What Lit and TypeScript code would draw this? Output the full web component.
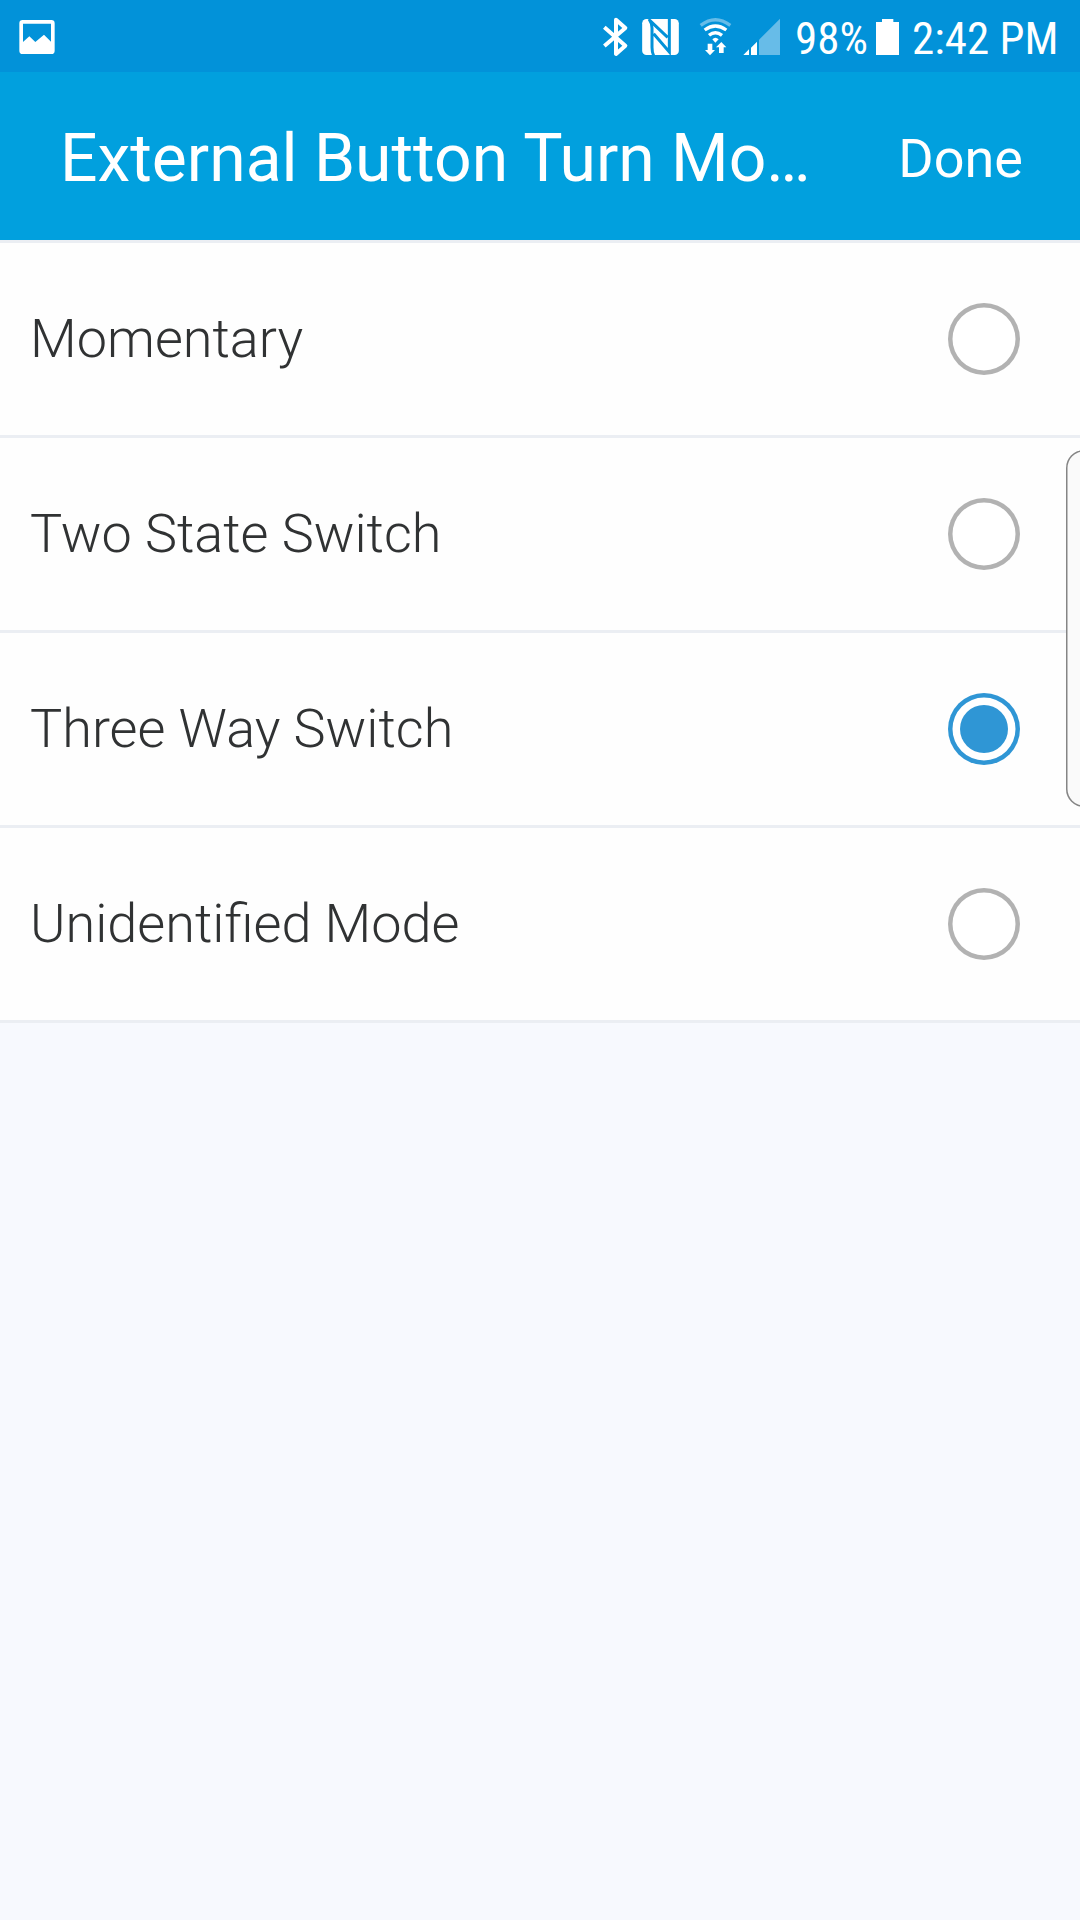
import { LitElement, html, css } from "lit";
import { customElement, property, state } from "lit/decorators.js";
import { classMap } from "lit/directives/class-map.js";

@customElement("status-bar")
class StatusBar extends LitElement {
  static styles = css`
    :host {
      display: flex;
      height: 72px;
      background: #0292d9;
      color: #fff;
      font-family: "Roboto Condensed", Roboto, sans-serif;
      font-size: 45px;
      line-height: 78px;
    }
    .left { flex: 1; }
    .icon { display: block; height: 72px; flex: none; }
    .pct, .time { flex: none; box-sizing: border-box; white-space: pre; }
    .pct { width: 79px; padding-left: 1px; }
    .time { width: 168px; }
  `;

  render() {
    return html`
      <div class="left">
        <svg class="icon" width="120" viewBox="0 0 360 216" fill="none">
          <path fill="#fff" fill-rule="evenodd" d="M68 60H154Q164 60 164 70V152Q164 162 154 162H68Q58 162 58 152V70Q58 60 68 60ZM69 71V126L88 109L106 126L132 104L153 125V71Z"/>
        </svg>
      </div>
      <svg class="icon" width="204" viewBox="0 0 612 216" fill="none">
        <path stroke="#fff" stroke-width="12" stroke-linejoin="round" d="M43 82L106 137L78 162V59L106 84L43 138"/>
        <rect x="156.500" y="57" width="110" height="108" rx="13" fill="#fff"/>
        <path stroke="#0292d9" stroke-width="9" d="M177 57Q186 70 186 84V142Q186 158 191 167M180 62L233 112M238 55V156L191 101"/>
        <path stroke="#67bce8" stroke-width="10" d="M332 76Q376 42 421 76"/>
        <path stroke="#fff" stroke-width="10" d="M344 90Q376 66 409 90M357 106Q376 90 396 106"/>
        <path fill="#fff" d="M367 118Q376 109 386 118L376 128ZM353 131H367V150H375L360 166L345 150H353ZM387 159H401V142H409L394 126L378 142H387Z"/>
        <path fill="#67bce8" d="M507 119L570 56V165H507Z"/>
        <path fill="#fff" d="M460 165L477 148V165ZM483 143L501 125V165H483Z"/>
      </svg>
      <span class="pct">98%</span>
      <svg class="icon" width="39" viewBox="0 0 117 216">
        <path fill="#fff" d="M27 57H61V66H78V165H9V66H27Z"/>
      </svg>
      <span class="time">2:42 PM</span>
    `;
  }
}

@customElement("title-bar")
class TitleBar extends LitElement {
  @property() heading = "";

  static styles = css`
    :host {
      display: flex;
      align-items: center;
      justify-content: space-between;
      height: 168px;
      box-sizing: border-box;
      padding: 5px 57px 0 60px;
      background: #01a0de;
      color: #fff;
      font-family: Roboto, sans-serif;
    }
    .heading {
      margin: 0;
      white-space: nowrap;
      font-weight: 400;
      font-size: 66px;
      line-height: 80px;
    }
    .done {
      padding: 0;
      border: 0;
      background: none;
      color: inherit;
      font: 400 54px/64px Roboto, sans-serif;
    }
  `;

  render() {
    return html`
      <h1 class="heading">${this.heading}</h1>
      <button class="done">Done</button>
    `;
  }
}

@customElement("app-root")
class AppRoot extends LitElement {
  @state() private modes = ["Momentary", "Two State Switch", "Three Way Switch", "Unidentified Mode"];
  @state() private selected = 2;

  static styles = css`
    :host {
      display: flex;
      flex-direction: column;
      position: relative;
      width: 1080px;
      height: 1920px;
      overflow: hidden;
      background: #f7f9fe;
      font-family: Roboto, sans-serif;
    }
    .list { border-top: 3px solid #ebeef3; background: #fefefe; }
    .row {
      display: flex;
      align-items: center;
      justify-content: space-between;
      box-sizing: border-box;
      height: 195px;
      padding: 0 60px 0 30px;
      border-bottom: 3px solid #ebeef3;
      color: #303233;
      font-size: 54px;
      font-weight: 300;
      line-height: 64px;
    }
    .radio {
      display: grid;
      place-items: center;
      width: 72px;
      height: 72px;
      box-shadow: inset 0 0 0 4.5px #b2b2b2;
      border-radius: 50%;
      background: #fff;
    }
    .radio.on { box-shadow: inset 0 0 0 4.5px #2f96d5; }
    .dot { width: 48px; height: 48px; border-radius: 50%; background: #2f96d5; }
    .edge-handle {
      position: absolute;
      top: 450px;
      right: -22px;
      box-sizing: border-box;
      width: 36px;
      height: 357px;
      box-shadow: inset 0 0 0 1.5px #858585;
      border-radius: 22px;
      background: #fafafa;
    }
  `;

  render() {
    return html`
      <status-bar></status-bar>
      <title-bar heading="External Button Turn Mo…"></title-bar>
      <div class="list" role="radiogroup">
        ${this.modes.map((mode, i) => html`
          <div class="row" role="radio" aria-checked=${i === this.selected} @click=${() => (this.selected = i)}>
            <span>${mode}</span>
            <span class=${classMap({ radio: true, on: i === this.selected })}>
              ${i === this.selected ? html`<span class="dot"></span>` : null}
            </span>
          </div>
        `)}
      </div>
      <div class="edge-handle"></div>
    `;
  }
}
